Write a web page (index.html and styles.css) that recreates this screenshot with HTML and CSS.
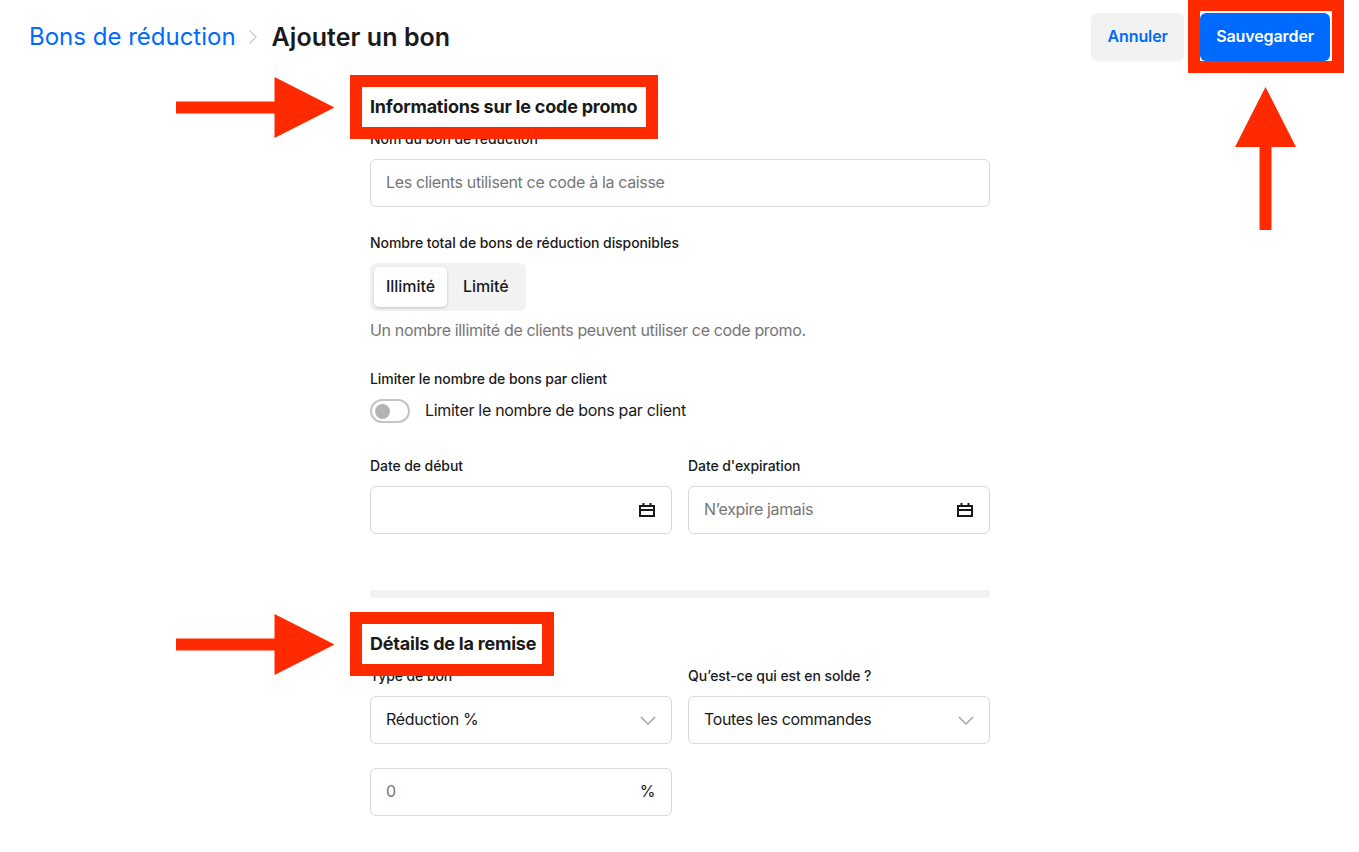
FILE: index.html
```html
<!DOCTYPE html>
<html lang="fr">
<head>
    <meta charset="UTF-8">
    <meta name="viewport" content="width=device-width, initial-scale=1.0">
    <title>Ajouter un bon</title>
    <link rel="stylesheet" href="styles.css">
</head>
<body>
    <div class="page">
        <header class="top-bar">
            <div class="crumbs">
                <a class="crumb-link">Bons de réduction</a>
                <svg class="crumb-sep" width="10" height="16" viewBox="0 0 10 16"><path d="M1.500 1.500L8 8l-6.500 6.500" fill="none" stroke="#cfcfcf" stroke-width="1.500"/></svg>
                <span class="crumb-current">Ajouter un bon</span>
            </div>
            <div class="actions">
                <button type="button" class="btn btn-cancel">Annuler</button>
                <button type="button" class="btn btn-save">Sauvegarder</button>
            </div>
        </header>

        <main class="form">
            <h2 class="section-title title-first">Informations sur le code promo</h2>

            <label class="label label-name">Nom du bon de réduction</label>
            <div class="field"><span class="placeholder">Les clients utilisent ce code à la caisse</span></div>

            <label class="label label-total">Nombre total de bons de réduction disponibles</label>
            <div class="segmented">
                <span class="segment segment-on">Illimité</span>
                <span class="segment">Limité</span>
            </div>
            <p class="help">Un nombre illimité de clients peuvent utiliser ce code promo.</p>

            <label class="label label-limit">Limiter le nombre de bons par client</label>
            <div class="toggle-row">
                <span class="toggle"><span class="toggle-knob"></span></span>
                <span class="toggle-text">Limiter le nombre de bons par client</span>
            </div>

            <div class="two-cols dates">
                <div>
                    <label class="label">Date de début</label>
                    <div class="field">
                        <span></span>
                        <svg class="cal" width="16" height="14" viewBox="0 0 16 14"><path d="M1 3h14v10H1zM1 7h14M4.500 0v3M11.500 0v3" fill="none" stroke="#1a1a1a" stroke-width="2"/></svg>
                    </div>
                </div>
                <div>
                    <label class="label">Date d'expiration</label>
                    <div class="field">
                        <span class="placeholder">N’expire jamais</span>
                        <svg class="cal" width="16" height="14" viewBox="0 0 16 14"><path d="M1 3h14v10H1zM1 7h14M4.500 0v3M11.500 0v3" fill="none" stroke="#1a1a1a" stroke-width="2"/></svg>
                    </div>
                </div>
            </div>

            <div class="divider"></div>

            <h2 class="section-title title-second">Détails de la remise</h2>

            <div class="two-cols">
                <div>
                    <label class="label">Type de bon</label>
                    <div class="field">
                        <span>Réduction %</span>
                        <svg class="chevron" width="16" height="9" viewBox="0 0 16 9"><path d="M1 1l7 7 7-7" fill="none" stroke="#a6a6a6" stroke-width="1.500"/></svg>
                    </div>
                </div>
                <div>
                    <label class="label">Qu’est-ce qui est en solde ?</label>
                    <div class="field">
                        <span>Toutes les commandes</span>
                        <svg class="chevron" width="16" height="9" viewBox="0 0 16 9"><path d="M1 1l7 7 7-7" fill="none" stroke="#a6a6a6" stroke-width="1.500"/></svg>
                    </div>
                </div>
            </div>

            <div class="two-cols amount">
                <div class="field">
                    <span class="placeholder">0</span>
                    <span>%</span>
                </div>
            </div>
        </main>

        <!-- annotations on top of the screenshot -->
        <div class="mark mark-info"></div>
        <div class="mark mark-details"></div>
        <div class="mark mark-save"></div>

        <svg class="arrow arrow-info" width="159" height="61" viewBox="0 0 159 61"><path d="M0 24.500h98.500V0l60 30.500-60 30.500V36.500H0z" fill="#ff2a00"/></svg>
        <svg class="arrow arrow-details" width="159" height="61" viewBox="0 0 159 61"><path d="M0 24.500h98.500V0l60 30.500-60 30.500V36.500H0z" fill="#ff2a00"/></svg>
        <svg class="arrow arrow-save" width="61" height="143" viewBox="0 0 61 143"><path d="M30.500 0L61 60H36.500v83h-12V60H0z" fill="#ff2a00"/></svg>
    </div>
</body>
</html>
```

FILE: styles.css
```css
* {
    box-sizing: border-box;
}

body {
    margin: 0;
    background: #ffffff;
    color: #1a1a1a;
    font-family: Inter, "Liberation Sans", sans-serif;
    font-size: 16px;
    line-height: 20px;
    letter-spacing: -0.35px;
}

.page {
    position: relative;
    width: 1359px;
    height: 852px;
    overflow: hidden;
}

.top-bar {
    display: flex;
    justify-content: space-between;
    align-items: center;
    padding: 13px 29px 0 29px;
}

.crumbs {
    display: flex;
    align-items: center;
    height: 48px;
    font-size: 24px;
    line-height: 44px;
    letter-spacing: 0;
}

.crumb-link {
    color: #006aff;
    margin-right: -1px;
}

.crumb-sep {
    margin: 0 14px 0 13px;
}

.crumb-current {
    font-size: 25px;
    font-weight: 600;
    letter-spacing: 0.05px;
}

.actions {
    display: flex;
    gap: 16px;
}

.btn {
    height: 48px;
    padding: 0 16px 2px;
    border: none;
    border-radius: 6px;
    font-family: inherit;
    font-size: 16px;
    font-weight: 600;
    letter-spacing: -0.1px;
}

.btn-cancel {
    width: 93px;
    background: #f2f2f2;
    color: #006aff;
}

.btn-save {
    background: #006aff;
    color: #ffffff;
}

.form {
    width: 620px;
    margin-left: 370px;
}

.section-title {
    margin: 0;
    font-size: 18px;
    line-height: 20px;
    font-weight: 700;
    letter-spacing: -0.22px;
}

.title-first {
    margin-top: 36px;
}

.title-second {
    margin-top: 36px;
}

.label {
    display: block;
    margin-bottom: 10px;
    font-size: 14px;
    font-weight: 500;
    letter-spacing: -0.08px;
}

.label-name {
    margin-top: 12px;
}

.label-total {
    margin-top: 26px;
}

.label-limit {
    margin-top: 29px;
}

.field {
    display: flex;
    justify-content: space-between;
    align-items: center;
    height: 48px;
    padding: 0 16px 0 15px;
    border: 1px solid #d9d9d9;
    border-radius: 6px;
}

.field span {
    margin-bottom: 2px;
}

.chevron {
    margin-right: -1px;
}

.placeholder {
    color: #767676;
}

.segmented {
    display: inline-flex;
    width: 156px;
    height: 48px;
    padding: 4px;
    background: #f2f2f2;
    border-radius: 6px;
    font-weight: 500;
    letter-spacing: -0.05px;
}

.segment {
    padding: 0 12px;
    line-height: 38px;
}

.segment-on {
    background: #ffffff;
    border-radius: 5px;
    box-shadow: 0 1px 3px rgba(0, 0, 0, 0.2);
}

.segment + .segment {
    padding-left: 16px;
}

.help {
    margin: 9px 0 0;
    color: #767676;
}

.toggle-row {
    display: flex;
    align-items: center;
    gap: 15px;
    height: 24px;
}

.toggle-text {
    margin-bottom: 2px;
    letter-spacing: -0.3px;
}

.toggle {
    display: flex;
    align-items: center;
    width: 40px;
    height: 24px;
    padding-left: 3px;
    border: 2px solid #c4c4c4;
    border-radius: 12px;
}

.toggle-knob {
    width: 15px;
    height: 15px;
    background: #b3b3b3;
    border-radius: 50%;
}

.two-cols {
    display: grid;
    grid-template-columns: 302px 302px;
    gap: 16px;
}

.dates {
    margin-top: 33px;
}

.divider {
    height: 8px;
    margin-top: 56px;
    background: #f2f2f2;
    border-radius: 2px;
}

.title-second + .two-cols {
    margin-top: 12px;
}

.amount {
    margin-top: 24px;
}

.mark {
    position: absolute;
    border: 12px solid #ff2a00;
}

.mark-info {
    left: 350px;
    top: 75px;
    width: 308px;
    height: 64px;
}

.mark-details {
    left: 350px;
    top: 612px;
    width: 204px;
    height: 64px;
}

.mark-save {
    left: 1188px;
    top: -1px;
    width: 156px;
    height: 74px;
}

.arrow {
    position: absolute;
}

.arrow-info {
    left: 176px;
    top: 77px;
}

.arrow-details {
    left: 176px;
    top: 614px;
}

.arrow-save {
    left: 1235px;
    top: 87px;
}
```
